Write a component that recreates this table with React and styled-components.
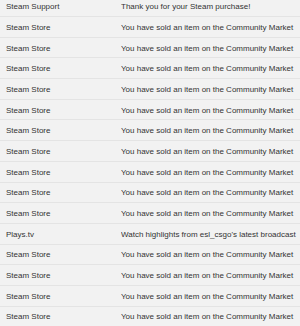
import React from "react";
import styled, { createGlobalStyle } from "styled-components";

const GlobalStyle = createGlobalStyle`
  html, body {
    margin: 0;
    padding: 0;
    background: #f2f2f2;
    overflow: hidden;
  }
`;

const sold = ["Steam Store", "You have sold an item on the Community Market"];

const messages = [
  ["Steam Support", "Thank you for your Steam purchase!"],
  ...Array(10).fill(sold),
  ["Plays.tv", "Watch highlights from esl_csgo's latest broadcast"],
  ...Array(4).fill(sold),
];

export default function App() {
  return (
    <>
      <GlobalStyle />
      <Inbox>
        {messages.map(([sender, subject], i) => (
          <Row key={i}>
            <Sender>{sender}</Sender>
            <Subject>{subject}</Subject>
          </Row>
        ))}
      </Inbox>
    </>
  );
}

const Inbox = styled.div`
  width: 300px;
  margin-top: -3.7px;
  background: #f2f2f2;
`;

const Row = styled.div`
  display: grid;
  grid-template-columns: 121px 1fr;
  align-items: center;
  height: 20.7px;
  box-sizing: border-box;
  border-bottom: 1px solid #e4e4e4;
  font-family: "Liberation Sans", Arial, sans-serif;
  font-size: 8px;
  color: #333;
  padding-top: 1px;
`;

const Sender = styled.span`
  padding-left: 6px;
  white-space: nowrap;
`;

const Subject = styled.span`
  white-space: nowrap;
  overflow: hidden;
`;
